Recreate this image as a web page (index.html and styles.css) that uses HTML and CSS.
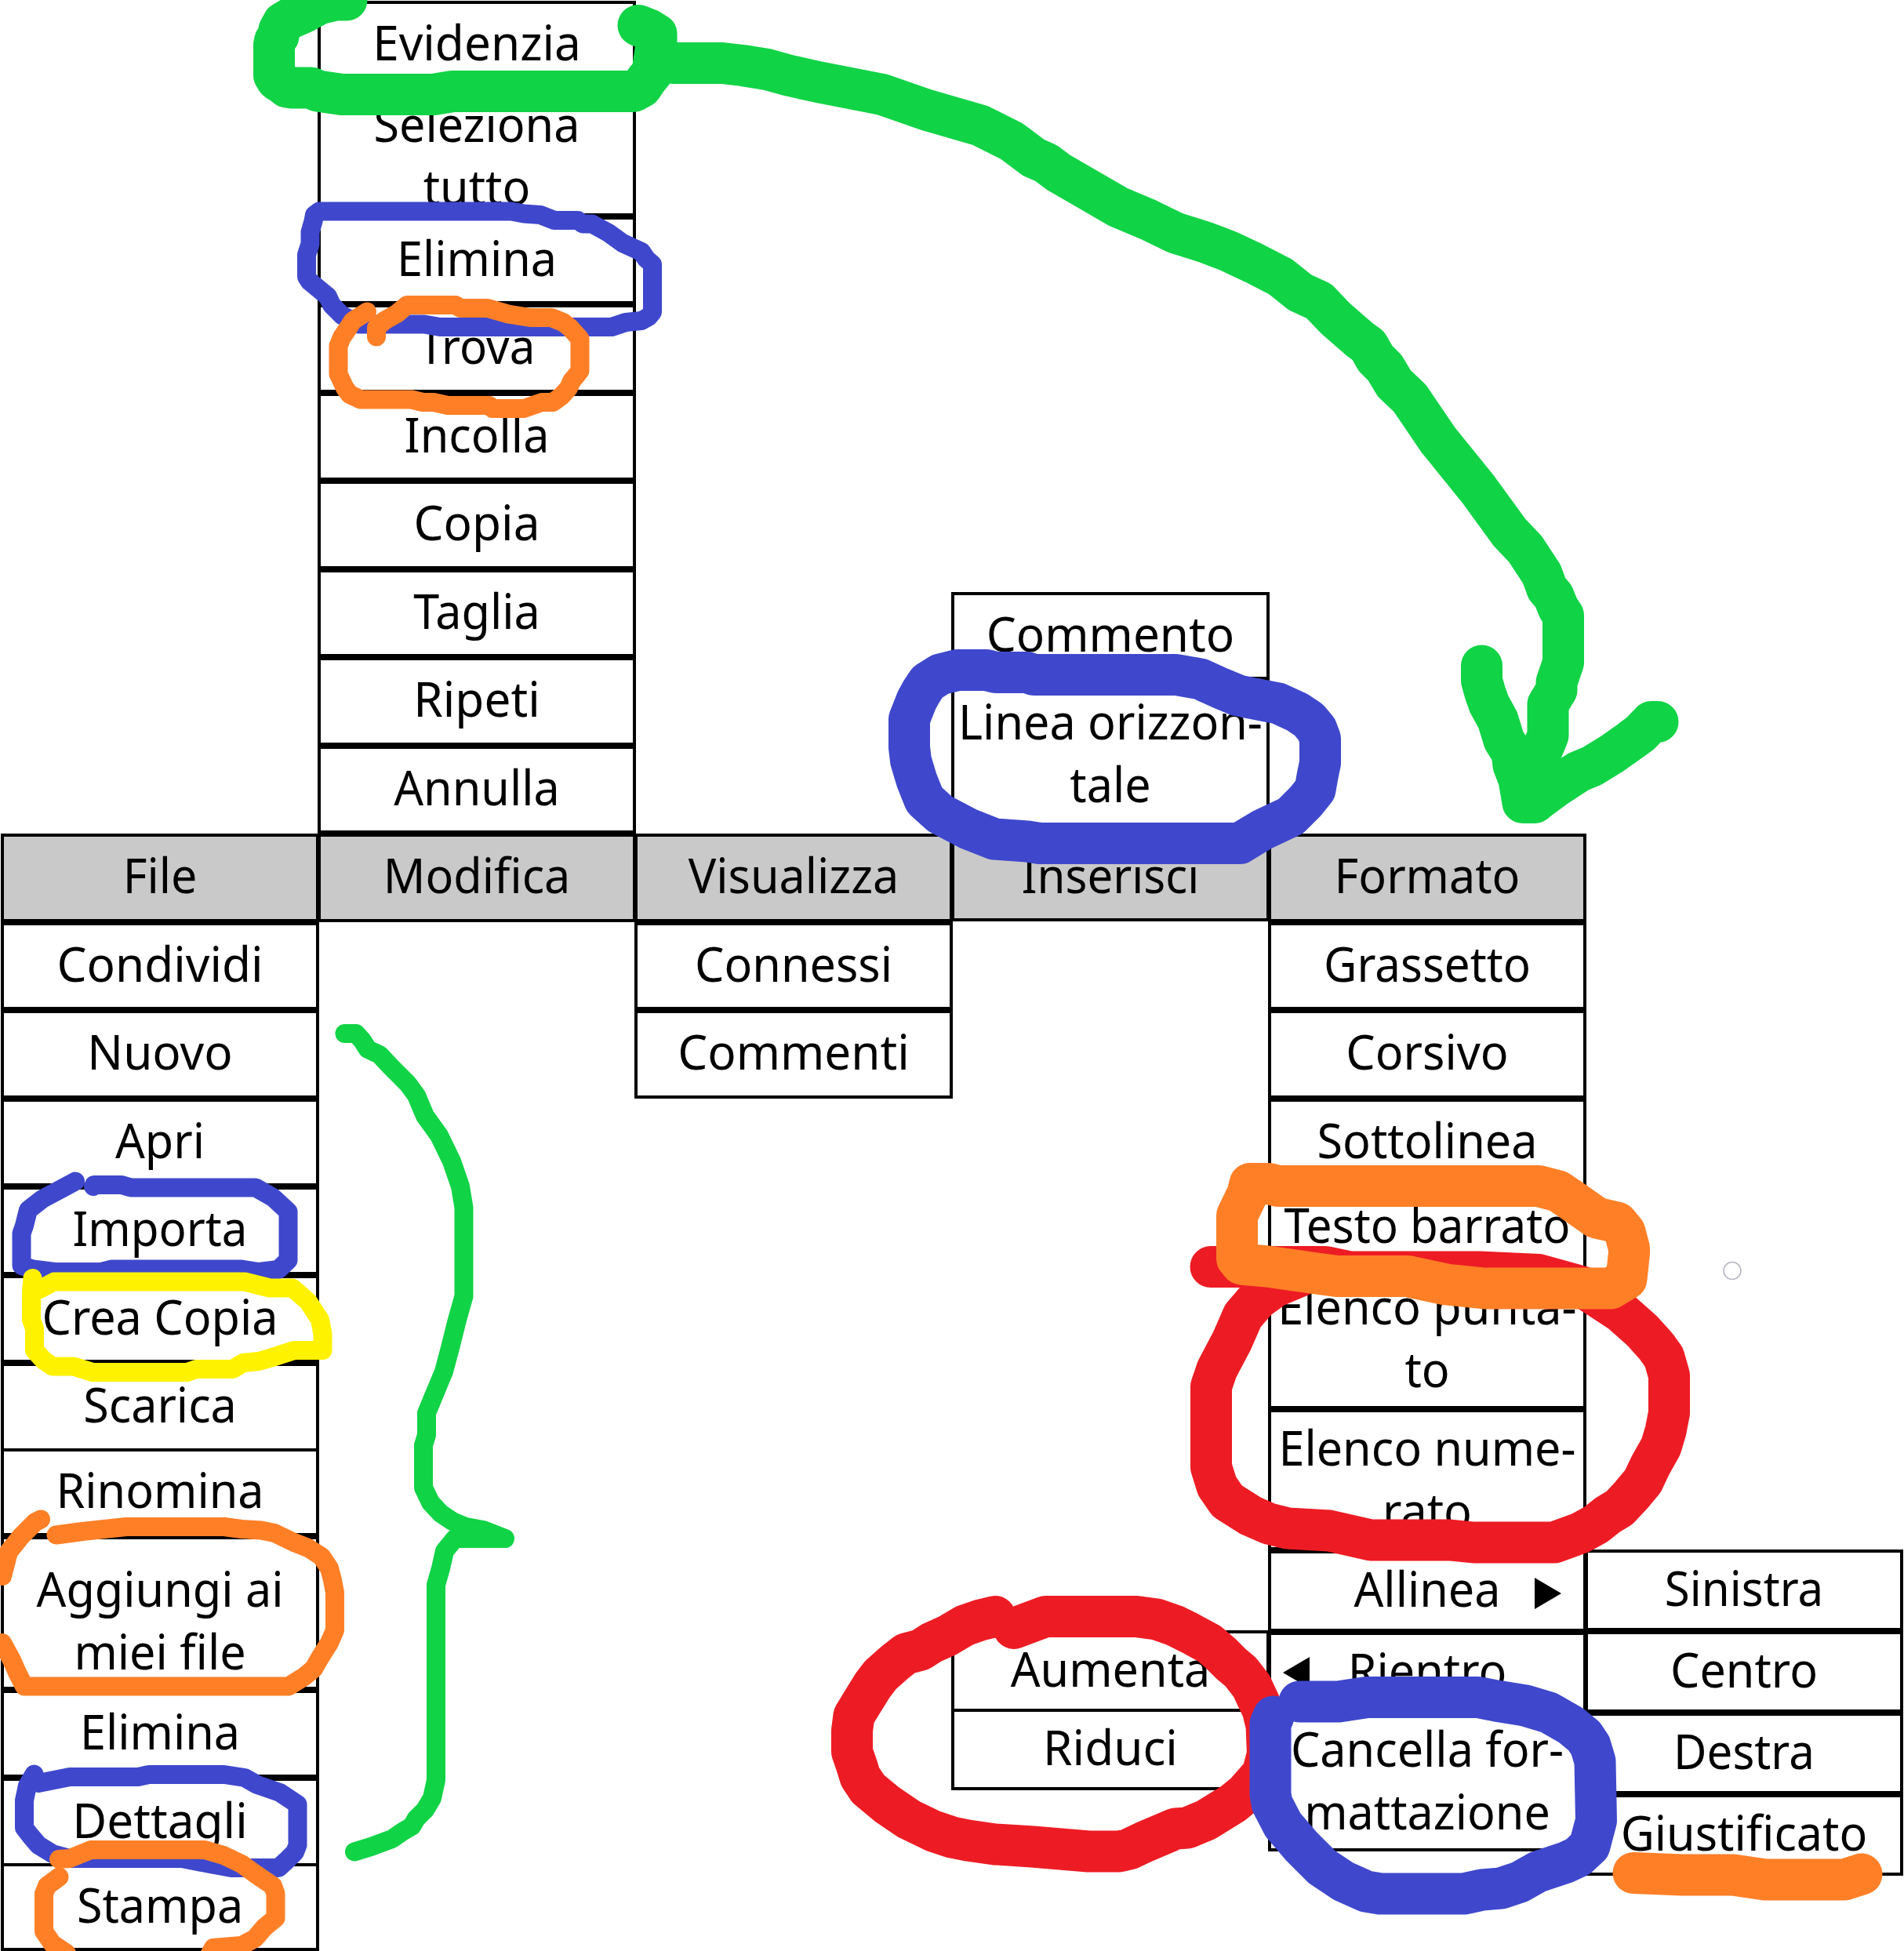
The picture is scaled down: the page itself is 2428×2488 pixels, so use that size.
FILE: index.html
```html
<!DOCTYPE html>
<html lang="it">
<head>
<meta charset="utf-8">
<title>Menu</title>
<link rel="stylesheet" href="styles.css">
</head>
<body>
<main class="board">
  <section class="column column-file">
    <div class="cell head"><span>File</span></div>
    <div class="cell"><span class="wide">Condividi</span></div>
    <div class="cell"><span class="wide">Nuovo</span></div>
    <div class="cell"><span>Apri</span></div>
    <div class="cell"><span class="slim">Importa</span></div>
    <div class="cell"><span>Crea Copia</span></div>
    <div class="cell"><span>Scarica</span></div>
    <div class="cell joined"><span>Rinomina</span></div>
    <div class="cell tall roomy"><span>Aggiungi ai<br>miei file</span></div>
    <div class="cell"><span>Elimina</span></div>
    <div class="cell"><span class="wide">Dettagli</span></div>
    <div class="cell joined"><span>Stampa</span></div>
  </section>
  <section class="column column-edit">
    <div class="cell"><span class="wide">Evidenzia</span></div>
    <div class="cell snug"><span>Seleziona<br>tutto</span></div>
    <div class="cell"><span>Elimina</span></div>
    <div class="cell"><span class="slim">Trova</span></div>
    <div class="cell"><span>Incolla</span></div>
    <div class="cell"><span class="wide">Copia</span></div>
    <div class="cell"><span>Taglia</span></div>
    <div class="cell"><span class="wide">Ripeti</span></div>
    <div class="cell"><span>Annulla</span></div>
    <div class="cell head"><span>Modifica</span></div>
  </section>
  <section class="column column-view">
    <div class="cell head"><span>Visualizza</span></div>
    <div class="cell"><span>Connessi</span></div>
    <div class="cell"><span class="wide">Commenti</span></div>
  </section>
  <section class="column column-insert">
    <div class="cell"><span class="wide">Commento</span></div>
    <div class="cell tall"><span>Linea orizzon-<br>tale</span></div>
    <div class="cell head"><span class="slim">Inserisci</span></div>
    <div class="submenu">
      <div class="cell short"><span>Aumenta</span></div>
      <div class="cell short joined"><span class="wide">Riduci</span></div>
    </div>
  </section>
  <section class="column column-format">
    <div class="cell head"><span>Formato</span></div>
    <div class="cell"><span class="slim">Grassetto</span></div>
    <div class="cell"><span>Corsivo</span></div>
    <div class="cell"><span>Sottolinea</span></div>
    <div class="cell joined"><span class="slim">Testo barrato</span></div>
    <div class="cell double lifted"><span>Elenco punta-<br>to</span></div>
    <div class="cell double"><span>Elenco nume-<br>rato</span></div>
    <div class="cell short"><span>Allinea</span><svg class="marker marker-right" viewBox="0 0 34 40"><path d="M0 0L34 20L0 40Z"/></svg></div>
    <div class="cell short"><span>Rientro</span><svg class="marker marker-left" viewBox="0 0 34 40"><path d="M34 0L0 20L34 40Z"/></svg></div>
    <div class="cell double joined"><span>Cancella for-<br>mattazione</span></div>
  </section>
  <section class="column column-align">
    <div class="cell short"><span class="slim">Sinistra</span></div>
    <div class="cell short"><span>Centro</span></div>
    <div class="cell short"><span class="slim">Destra</span></div>
    <div class="cell short"><span>Giustificato</span></div>
  </section>

  <svg class="ink" viewBox="0 0 2428 2488">
    <!-- Evidenzia moves to Formato -->
    <g class="green thick">
      <path d="M442 0L428 0L407 5L387 16L371 23L361 29L356 38L355 46L350.500 52L349.500 57V96L353 102L361 107L366 111L373 112H397L405 116L436 120.500H553L577 116.500H808L818 111L824 102L832 92L834 77L837 57V43.500L828 38L814 32.500"/>
      <path d="M858 80.500H921L947 83.500L978 88.500L1007 96.500L1043 104.500L1125 120.500L1181 140L1250 160L1290 180L1318 201L1334 208L1350 220L1426 264L1464 280L1499 297L1537 309L1566 320L1600 336L1633 353L1658 373L1682 384L1703 406L1734 433L1745 441L1754 457L1766 469L1778 489L1798 508L1834 561L1885 624L1925 679L1945 700L1966 732L1973 751L1981 760L1987 775L1993.500 785V845L1985 870V880L1974 898V938L1965 960L1957 1023.500H1942L1937 994L1930 976L1928 960L1918 944L1910 918L1899 898L1894 884L1889.500 868V849"/>
      <path d="M2114 920.500H2106L2092 935L2080 944L2056 961L2030 977L2013 984L1987 1001L1957 1023"/>
    </g>
    <!-- Modifica -->
    <path class="blue" d="M407 269.500H652L668 272.500L689 274L707 281H737L743 285.500H755L776 297L794 310L818 321L824 330L832 337V398L827 404L818 409L798 411L780 417H561L541 413.500H458L436 402L423 389L418 378L395 359L391 353V325L395.500 311V296L399.500 282L401 274Z"/>
    <path class="orange" d="M468 397.500L450 409L443 420L436 430L431.500 441V477L440 495L446 503L460 509.500H525L539 513H553L571 517H624L628 521H668L691 513H705L716 505L725 495L729 486L739.500 473V432L727 418L718 411L703 405H676L648 400.500L622 393H587L581 389H519L506 400L490 409L480 418V429.500"/>
    <!-- Inserisci -->
    <path class="blue thick" d="M1221 854.500H1258L1270 857.500H1310L1318 860.500H1500L1531 866L1555 877L1579 887L1630 897L1654 908L1669 918L1679 930L1683.500 942V973L1680 990L1677 1007L1665 1022L1646 1041L1610 1058L1595 1067L1581 1075.500H1326L1310 1073L1268 1070L1235 1057L1199 1038L1179 1020L1169 995L1161.500 970L1159.500 953V917L1169 893L1175 882L1183 870L1199 860Z"/>
    <!-- File -->
    <path class="blue" d="M96 1506.500L54 1529L36 1543L31 1563L27.500 1573V1614L42 1618.500L70 1622H129L143 1618.500H308L330 1622L355 1619L367.500 1607V1545L348 1527L326 1514.500H167L155 1511H120L119 1513"/>
    <path class="yellow" d="M41.500 1630L40 1646V1683L44 1694V1722L56 1735L67 1742.500H94L118 1750H239L250 1746H297L310 1738L330 1736L344 1732L375 1722H411.500V1701L408 1683L393 1660L373 1642.500H344L312 1634.500H69L49 1645"/>
    <path class="green" d="M439.500 1318H454L462 1327L469 1338L484 1345L498 1360L520 1382L531 1397L542 1423L560 1448L576 1481L587 1513L591.500 1540V1653L583 1683L574 1719L566 1749L556 1773L544 1802V1830L540 1843V1897L549 1916L562 1930L577 1940L594 1947L616 1951L644 1962H580L567 1978L562 2000L556 2021V2270L551 2293L542 2308L531 2319L525 2329L513 2336L500 2345L473 2355L452 2361.500"/>
    <path class="orange" d="M71.500 1957.500L105 1953L161 1947H286L308 1950L333 1951.500L350 1955L375 1967L393 1974L410 1985L420 2000L424 2015L427 2031V2079L420 2095L408 2114L400 2128L388 2138L368 2150.500H31L22 2133L15 2117L3 2095"/>
    <path class="orange" d="M52 1937.500L45 1941L27 1959L11 1979L3 2010"/>
    <path class="blue" d="M43.500 2262.500L35 2277L31 2296V2331L38 2340L49 2353L67 2364L89 2370H232L268 2377L295 2382H355L365 2373L376 2362L379.500 2353V2301L357 2286L328 2276L312 2267L286 2263H190L176 2266H89L49 2274"/>
    <path class="orange" d="M75.500 2393.500L60 2405L56 2415V2463L67 2479L85 2491"/>
    <path class="orange" d="M75 2371L89 2370L116 2359H261L285 2366L308 2377L326 2390L348 2405L351.500 2415V2446L337 2458L325 2472L308 2481L272 2484L268 2491"/>
    <!-- Formato -->
    <path class="red thick" d="M1544 1615.500H1690L1721 1622H1886L1962 1625.500L2018 1641L2067 1673L2094 1697L2112 1717L2122 1731L2128.500 1754V1802L2124 1825L2118 1845L2105 1868L2095 1889L2080 1907L2065 1923L2050 1932L2035 1944L2015 1955L1982 1967H1879L1849 1964H1748L1695 1952L1642 1949L1618 1943L1595 1933L1565 1914L1552 1895L1544.500 1871V1768L1552 1746L1571 1710L1585 1678L1603 1657L1625 1641L1656 1628"/>
    <path class="orange thick" d="M1594 1509.500H1618L1630 1512.500H1962L1987 1519L2009 1534L2036 1553L2062 1559L2072 1571L2077.500 1592V1598L2074 1631L2054 1643H1893L1844 1638L1795 1627.500H1705L1679 1624L1616 1615L1583 1612L1577.500 1605V1550L1591 1522Z"/>
    <path class="red thick" d="M1293 2076.500L1333 2061.500H1449L1475 2065L1498 2073L1518 2083L1542 2096L1556 2108L1570 2122L1582 2132L1596 2150L1603 2165L1610 2180L1615 2200L1616.500 2237L1610 2262L1588 2287L1572 2300L1538 2321L1514 2331L1499 2332L1459 2349L1440 2358L1427 2361H1388L1317 2355L1269 2352L1234 2347L1214 2343L1190 2335L1159 2320L1131 2301L1107 2281L1097 2266L1093 2253L1086.500 2234V2207L1089 2188L1100 2170L1113 2149L1123 2136L1141 2120L1155 2109L1174 2104L1188 2095L1208 2086L1230 2073L1250 2066L1269 2061.500"/>
    <path class="blue thick" d="M1657 2170H1707L1743 2164.500H1885L1908 2169L1945 2175L1975 2184L2003 2200L2020 2214L2028 2226L2034 2246L2035.500 2322L2027 2354L2012 2368L1997 2375L1961 2387L1938 2400L1914 2408L1890 2410L1867 2415H1760L1742 2412L1713 2399L1686 2381L1660 2355L1636 2327L1622 2300L1620 2288V2198L1624 2189"/>
    <path class="orange thick" d="M2083 2388.500L2145 2391H2210L2251 2397H2352L2374 2390"/>
    <circle class="cursor" cx="2209" cy="1620.500" r="11"/>
  </svg>
</main>
</body>
</html>
```
FILE: styles.css
```css
* {
  box-sizing: border-box;
}

body {
  margin: 0;
  background: #fff;
  color: #000;
  font-family: "Noto Sans", sans-serif;
  font-size: 62.5px;
  line-height: 80px;
}

.board {
  position: relative;
  display: flex;
  align-items: flex-start;
  width: 2428px;
  height: 2488px;
  padding-left: 1px;
  overflow: hidden;
}

.column {
  flex: none;
  width: 404px;
}

.column-file,
.column-view,
.column-format {
  padding-top: 1063px;
}

.column-edit {
  padding-top: 0.5px;
}

.column-insert {
  padding-top: 754.5px;
}

.column-align {
  padding-top: 1975.750px;
}

.cell {
  position: relative;
  width: 406px;
  height: 112.5px;
  padding-top: 8.250px;
  border: 4px solid #000;
  text-align: center;
  white-space: nowrap;
}

.cell span {
  display: block;
  margin: 0 -30px;
  transform: scaleX(0.948);
}

.cell .wide {
  transform: scaleX(0.964);
}

.cell .slim {
  transform: scaleX(0.932);
}

.head {
  background: #c9c9c9;
}

.joined {
  margin-top: -4px;
}

.lifted {
  margin-top: -5px;
}

.snug {
  height: 162.5px;
  padding-top: 0;
}

.tall {
  height: 195.750px;
}

.roomy {
  padding-top: 22px;
}

.short {
  height: 104px;
  padding-top: 4px;
}

.double {
  height: 180px;
  padding-top: 4px;
}

.submenu {
  padding-top: 904px;
}

.marker {
  position: absolute;
  width: 34px;
  height: 40px;
}

.marker-right {
  top: 31px;
  right: 28px;
}

.marker-left {
  top: 28px;
  left: 15px;
}

.ink {
  position: absolute;
  top: 0;
  left: 0;
  width: 2428px;
  height: 2488px;
  fill: none;
  stroke-width: 24px;
  stroke-linecap: round;
  stroke-linejoin: round;
}

.thick {
  stroke-width: 53px;
}

.green {
  stroke: #11d346;
}

.blue {
  stroke: #3f48cc;
}

.orange {
  stroke: #ff7f27;
}

.yellow {
  stroke: #fff200;
}

.red {
  stroke: #ed1c24;
}

.cursor {
  stroke: #b4b4c0;
  stroke-width: 1.5px;
}
```
